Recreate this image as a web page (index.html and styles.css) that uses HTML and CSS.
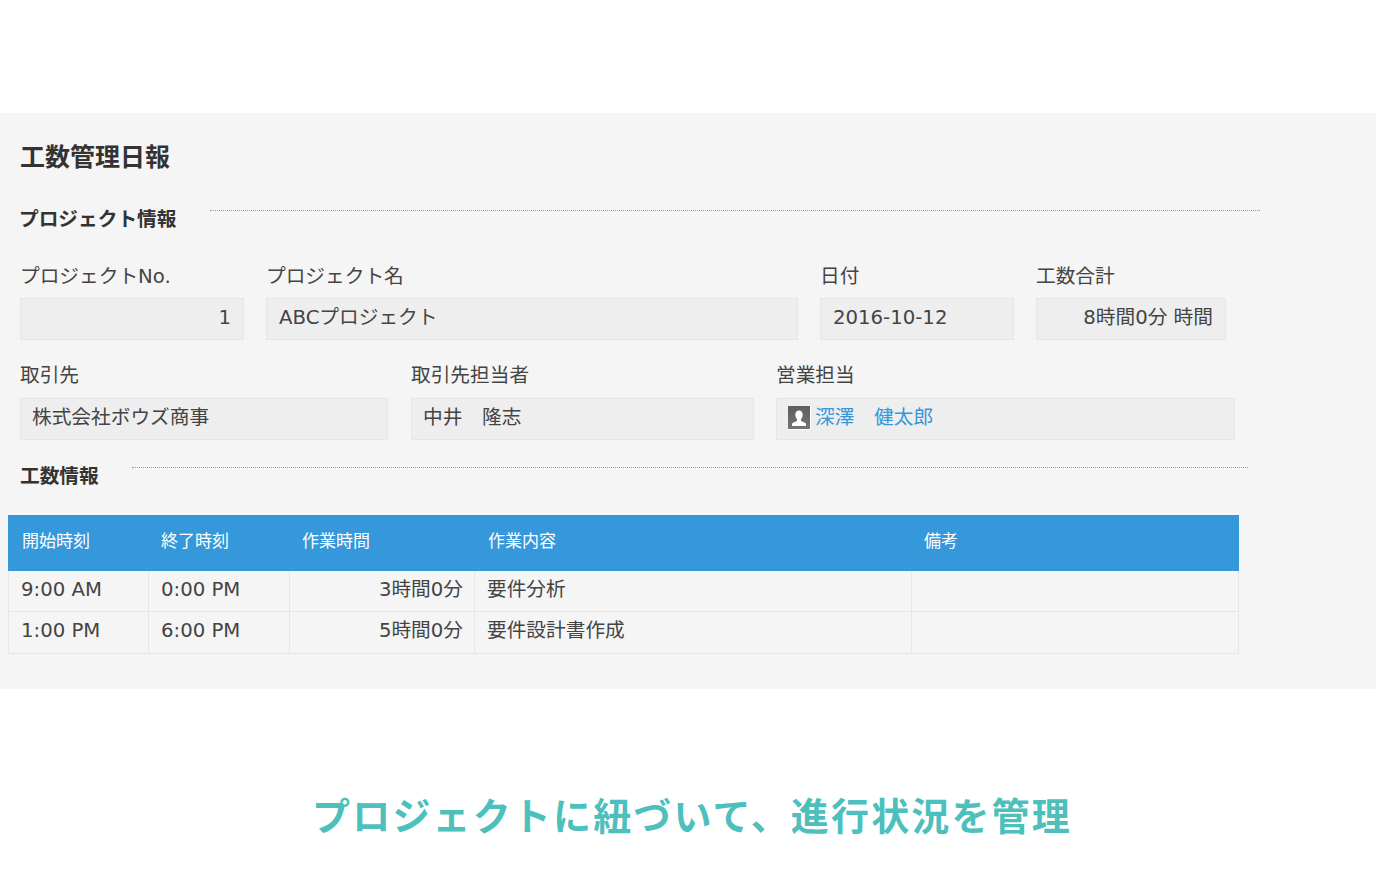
FILE: index.html
```html
<!DOCTYPE html>
<html lang="ja">
<head>
  <meta charset="UTF-8">
  <meta name="viewport" content="width=device-width, initial-scale=1.0">
  <title>工数管理日報</title>
  <link rel="stylesheet" href="styles.css">
</head>
<body>
  <div class="panel">
    <h1>工数管理日報</h1>

    <div class="section-head project-head">
      <h2>プロジェクト情報</h2>
      <div class="section-line"></div>
    </div>

    <div class="field-row first-row">
      <div class="field w-no">
        <label>プロジェクトNo.</label>
        <div class="value right">1</div>
      </div>
      <div class="field w-name">
        <label>プロジェクト名</label>
        <div class="value">ABCプロジェクト</div>
      </div>
      <div class="field w-date">
        <label>日付</label>
        <div class="value">2016-10-12</div>
      </div>
      <div class="field w-total">
        <label>工数合計</label>
        <div class="value right">8時間0分 時間</div>
      </div>
    </div>

    <div class="field-row second-row">
      <div class="field w-client">
        <label>取引先</label>
        <div class="value">株式会社ボウズ商事</div>
      </div>
      <div class="field w-contact">
        <label>取引先担当者</label>
        <div class="value">中井　隆志</div>
      </div>
      <div class="field w-sales">
        <label>営業担当</label>
        <div class="value user-value">
          <svg class="user-icon" width="23" height="24" viewBox="0 0 23 24">
            <defs>
              <linearGradient id="userBg" x1="0" y1="0" x2="0" y2="1">
                <stop offset="0" stop-color="#5e5e5e"/>
                <stop offset="1" stop-color="#747474"/>
              </linearGradient>
            </defs>
            <rect width="23" height="24" fill="#fff"/>
            <rect width="22" height="23" fill="url(#userBg)"/>
            <path d="M11 4.5c-2.4 0-3.7 1.9-3.7 4.2 0 1.9.8 3.3 1.7 4.2v2.2c-1.7.9-4.2 1.2-5 2.7V20h14v-2.2c-.8-1.5-3.3-1.8-5-2.7v-2.2c.9-.9 1.7-2.3 1.7-4.2 0-2.3-1.3-4.2-3.7-4.2z" fill="#fff"/>
          </svg>
          <a href="#">深澤　健太郎</a>
        </div>
      </div>
    </div>

    <div class="section-head work-head">
      <h2>工数情報</h2>
      <div class="section-line"></div>
    </div>

    <table class="work-table">
      <thead>
        <tr>
          <th class="col-start">開始時刻</th>
          <th class="col-end">終了時刻</th>
          <th class="col-time">作業時間</th>
          <th class="col-work">作業内容</th>
          <th class="col-note">備考</th>
        </tr>
      </thead>
      <tbody>
        <tr>
          <td>9:00 AM</td>
          <td>0:00 PM</td>
          <td class="right">3時間0分</td>
          <td>要件分析</td>
          <td></td>
        </tr>
        <tr>
          <td>1:00 PM</td>
          <td>6:00 PM</td>
          <td class="right">5時間0分</td>
          <td>要件設計書作成</td>
          <td></td>
        </tr>
      </tbody>
    </table>
  </div>

  <p class="caption">プロジェクトに紐づいて、進行状況を管理</p>
</body>
</html>
```

FILE: styles.css
```css
body {
  margin: 0;
  padding: 113px 0 0;
  background-color: #fff;
  color: #333;
  font-family: "DejaVu Sans", "Noto Sans CJK JP", sans-serif;
  overflow: hidden;
}
.panel {
  height: 576px;
  box-sizing: border-box;
  padding-top: 29px;
  background-color: #f5f5f5;
}
h1 {
  margin: 0 0 0 20px;
  height: 32px;
  font-size: 25px;
  line-height: 32px;
  font-weight: 700;
}
h2 {
  margin: 0;
  font-size: 19.7px;
  line-height: 26px;
  font-weight: 700;
  white-space: nowrap;
}
.section-head {
  display: flex;
  align-items: flex-start;
}
.section-line {
  height: 0;
  border-top: 1px dotted #999;
}
.project-head {
  margin: 33px 0 0 19px;
}
.project-head .section-line {
  margin-left: 33px;
  width: 1050px;
  margin-top: 3px;
}
.work-head {
  margin: 24px 0 0 20px;
}
.work-head .section-line {
  margin-left: 33px;
  width: 1116px;
  margin-top: 3px;
}
.field-row {
  display: flex;
  margin-left: 20px;
  gap: 22px;
}
.first-row {
  margin-top: 28px;
}
.second-row {
  margin-top: 20px;
}
.field label {
  display: block;
  height: 32px;
  font-size: 19.7px;
  line-height: 32px;
  color: #444;
}
.value {
  box-sizing: border-box;
  height: 42px;
  margin-top: 5px;
  padding: 0 12px;
  border: 1px solid #e6e6e6;
  background-color: #eee;
  font-size: 19.7px;
  line-height: 38px;
  color: #444;
  white-space: nowrap;
}
.second-row .value {
  margin-top: 6px;
  padding-left: 11px;
}
.right {
  text-align: right;
}
.w-no { width: 224px; }
.w-name { width: 532px; }
.w-date { width: 194px; }
.w-total { width: 190px; }
.w-client { width: 368px; margin-right: 1px; }
.w-contact { width: 343px; }
.w-sales { width: 459px; }
.user-value {
  display: flex;
  align-items: center;
  gap: 4px;
  padding-bottom: 2px;
}
.user-icon {
  flex: none;
}
.user-value a {
  color: #3498db;
  text-decoration: none;
}
.work-table {
  margin: 25px 0 0 8px;
  width: 1230px;
  table-layout: fixed;
  border-collapse: collapse;
  font-size: 19.7px;
  line-height: 24px;
  color: #444;
}
.work-table th {
  height: 55px;
  padding: 0 0 5px 12px;
  background-color: #3498db;
  border: 1px solid #3498db;
  color: #fff;
  font-size: 17px;
  font-weight: 400;
  text-align: left;
  box-sizing: border-box;
}
.work-table th.col-start,
.work-table th.col-work {
  padding-left: 13px;
}
.work-table td {
  height: 41px;
  padding: 0 10px 3px 12px;
  border: 1px solid #e6e6e6;
  box-sizing: border-box;
}
.work-table td.right {
  padding-right: 11px;
}
.work-table tr:last-child td {
  height: 42px;
}
.col-start { width: 140px; }
.col-end { width: 141px; }
.col-time { width: 185px; }
.col-work { width: 437px; }
.col-note { width: 327px; }
.caption {
  margin: 103px 0 0;
  padding-left: 8px;
  text-align: center;
  font-size: 38px;
  line-height: 50px;
  letter-spacing: 2.15px;
  font-weight: 700;
  color: #4dbfbd;
}
```
